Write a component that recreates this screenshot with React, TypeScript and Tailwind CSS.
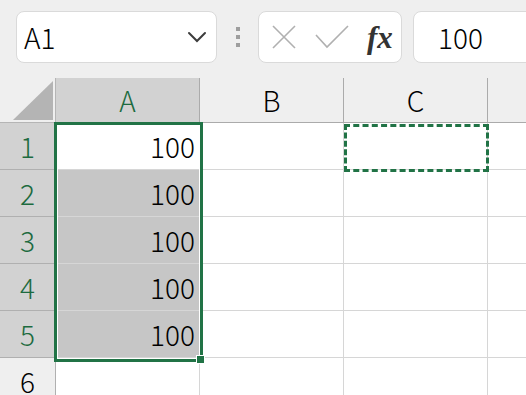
import React from 'react';

const FONT = { fontFamily: '"Noto Sans CJK JP", "Noto Sans", sans-serif' };
const rows = [1, 2, 3, 4, 5, 6];

function Chevron() {
  return (
    <svg width="20" height="12" viewBox="0 0 20 12" fill="none" stroke="#3c3c3c" strokeWidth="2" strokeLinecap="round">
      <path d="M2 2l8 8 8-8" />
    </svg>
  );
}

export default function App() {
  return (
    <div className="w-[526px] h-[395px] overflow-hidden bg-[#efefef] text-black font-light relative" style={FONT}>
      {/* formula bar */}
      <div className="h-[78px] flex items-start pt-[11px] pl-4">
        <div className="w-[201px] h-[52px] bg-white rounded-lg border border-[#dadada] flex items-center justify-between pl-[7px] pr-[9px]">
          <span className="text-[28px] leading-none">A1</span>
          <Chevron />
        </div>
        <div className="w-[41px] h-[52px] flex flex-col items-center justify-center gap-[4px]">
          <span className="w-[4px] h-[4px] bg-[#9e9e9e]" />
          <span className="w-[4px] h-[4px] bg-[#9e9e9e]" />
          <span className="w-[4px] h-[4px] bg-[#9e9e9e]" />
        </div>
        <div className="w-[144px] h-[52px] bg-white rounded-lg border border-[#dadada] flex items-center pl-[12px]">
          <svg width="26" height="26" viewBox="0 0 26 26" stroke="#b0b0b0" strokeWidth="1.6" fill="none">
            <path d="M2 2l22 22M24 2L2 24" />
          </svg>
          <svg className="ml-[18px]" width="34" height="24" viewBox="0 0 34 24" stroke="#b0b0b0" strokeWidth="1.6" fill="none">
            <path d="M1 10l11 12L33 1" />
          </svg>
          <span className="ml-[18px] text-[31px] leading-none italic font-bold text-[#333]" style={{ fontFamily: '"Liberation Serif", serif' }}>
            fx
          </span>
        </div>
        <div className="ml-[11px] flex-1 -mr-4 h-[52px] bg-white rounded-l-lg border border-[#dadada] flex items-center pl-[24px]">
          <span className="text-[28px] leading-none">100</span>
        </div>
      </div>

      {/* grid */}
      <div className="grid grid-cols-[56px_144px_144px_144px_144px] grid-rows-[45px_47px_47px_47px_47px_47px_47px]">
        {/* header row */}
        <div className="border-r border-b border-[#b5b5b5] flex items-end justify-end pr-[2px] pb-[2px]">
          <svg width="40" height="39" viewBox="0 0 40 39">
            <path d="M0 39L40 0V39Z" fill="#b4b4b4" />
          </svg>
        </div>
        <div className="bg-[#d2d2d2] border-r border-b border-[#ababab] flex items-center justify-center text-[28px] text-[#1d6b3f]">A</div>
        <div className="border-r border-b border-[#ababab] flex items-center justify-center text-[28px]">B</div>
        <div className="border-r border-b border-[#ababab] flex items-center justify-center text-[28px]">C</div>
        <div className="border-b border-[#ababab]" />

        {rows.map((r) => {
          const sel = r <= 5;
          return (
            <React.Fragment key={r}>
              <div
                className={
                  sel
                    ? 'bg-[#d2d2d2] border-r border-b border-[#b0b0b0] flex items-center justify-center text-[28px] text-[#1d6b3f]'
                    : 'bg-[#efefef] border-r border-b border-[#b0b0b0] flex items-center justify-center text-[28px]'
                }
              >
                {r}
              </div>
              <div
                className={
                  (r === 1 ? 'bg-white' : sel ? 'bg-[#c6c6c6]' : 'bg-white') +
                  ' border-r border-b border-[#d6d6d6] flex items-center justify-end pr-[4px] text-[28px]'
                }
              >
                {sel ? '100' : ''}
              </div>
              <div className="bg-white border-r border-b border-[#d6d6d6]" />
              <div className="bg-white border-r border-b border-[#d6d6d6]" />
              <div className="bg-white border-b border-[#d6d6d6]" />
            </React.Fragment>
          );
        })}
      </div>

      {/* selection */}
      <div className="absolute left-[54px] top-[122px] w-[149px] h-[240px] border-[3px] border-[#217346]">
        <div className="w-full h-full border border-white" />
        <div className="absolute right-[-5px] bottom-[-5px] w-[9px] h-[9px] bg-[#217346] border border-white" />
      </div>

      {/* copy marquee */}
      <div className="absolute left-[344px] top-[124px] w-[145px] h-[48px] border-[3px] border-dashed border-[#217346]" />
    </div>
  );
}
